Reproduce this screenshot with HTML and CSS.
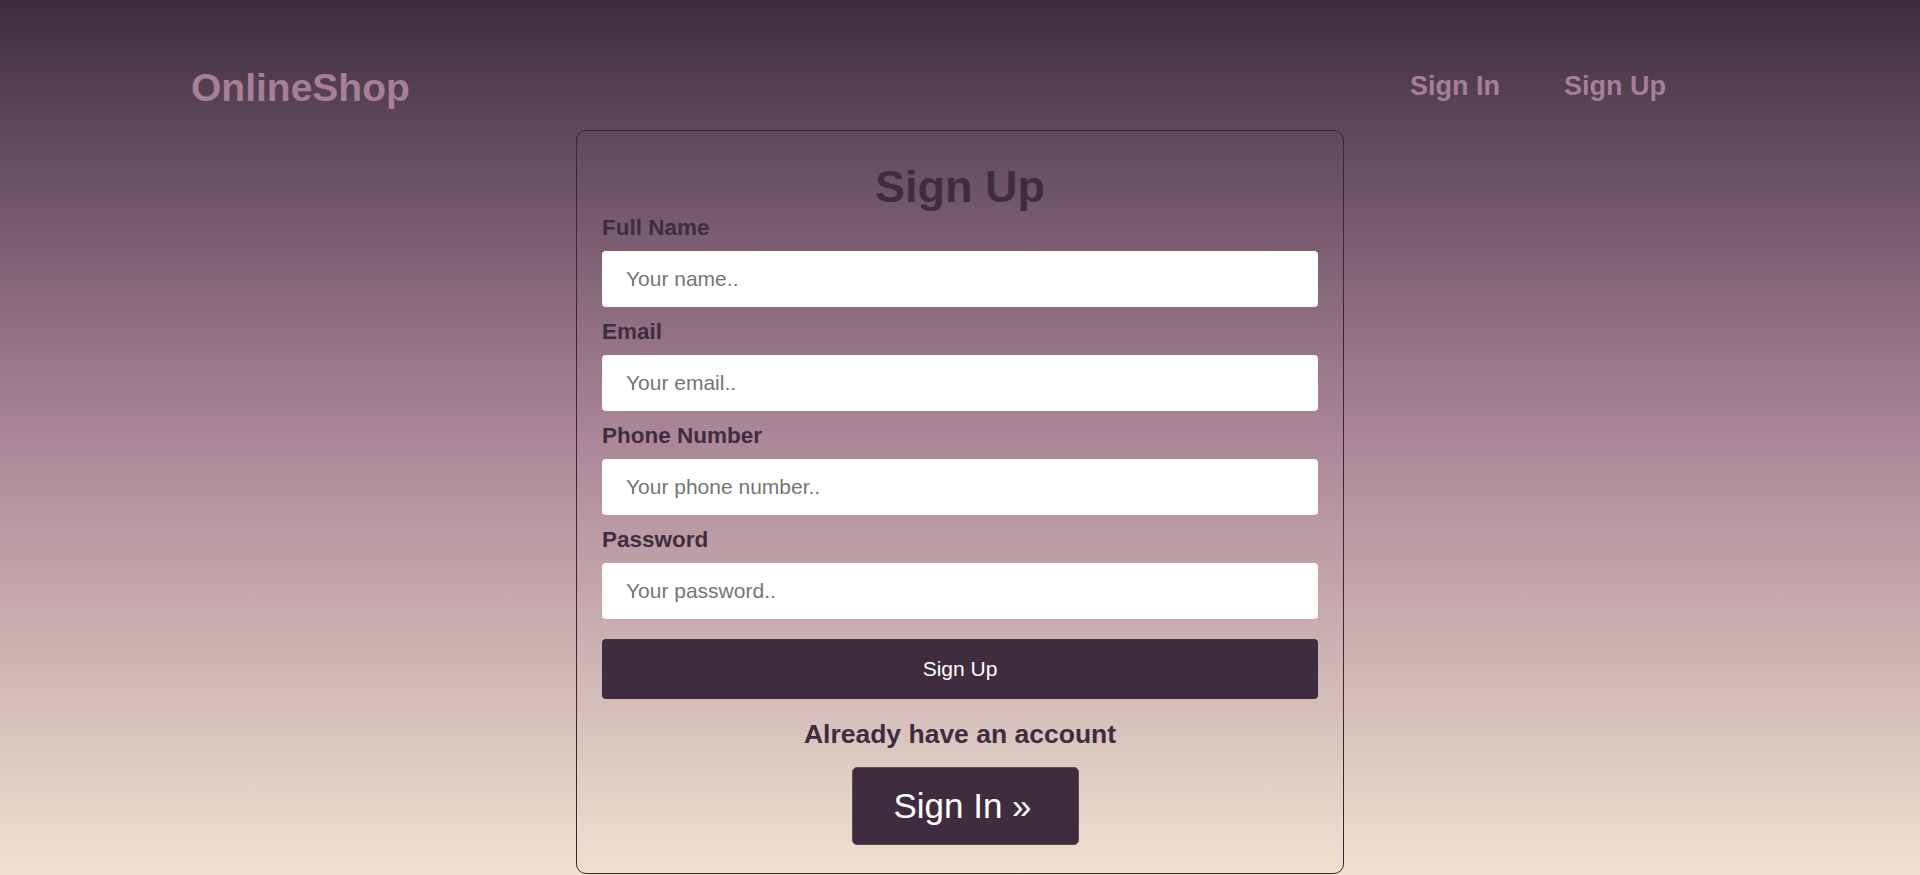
FILE: index.html
```html
<!DOCTYPE html>
<html lang="en">
<head>
<meta charset="utf-8">
<title>OnlineShop - Sign Up</title>
<link rel="stylesheet" href="styles.css">
</head>
<body>
  <header class="site-header">
    <a class="logo" href="#">OnlineShop</a>
    <nav class="nav">
      <a class="nav-link" href="#">Sign In</a>
      <a class="nav-link" href="#">Sign Up</a>
    </nav>
  </header>
  <main class="main">
    <form class="card">
      <h1 class="card-title">Sign Up</h1>
      <label class="field-label" for="name">Full Name</label>
      <input class="field-input" id="name" type="text" placeholder="Your name..">
      <label class="field-label" for="email">Email</label>
      <input class="field-input" id="email" type="email" placeholder="Your email..">
      <label class="field-label" for="phone">Phone Number</label>
      <input class="field-input" id="phone" type="text" placeholder="Your phone number..">
      <label class="field-label" for="password">Password</label>
      <input class="field-input" id="password" type="password" placeholder="Your password..">
      <button class="submit-btn" type="button">Sign Up</button>
      <p class="already">Already have an account</p>
      <a class="signin-btn" href="#">Sign In &raquo;</a>
    </form>
  </main>
</body>
</html>
```
FILE: styles.css
```css
* {
  box-sizing: border-box;
}

html, body {
  margin: 0;
  padding: 0;
}

body {
  min-height: 100vh;
  font-family: "Liberation Sans", Arial, sans-serif;
  background: linear-gradient(to bottom, #3e2d3f 0%, #ab8797 50%, #f0e1d1 100%);
  overflow: hidden;
}

.site-header {
  display: flex;
  justify-content: space-between;
  align-items: center;
  padding: 65px 254px 0 191px;
}

.logo {
  font-size: 39px;
  font-weight: bold;
  color: #a67f96;
  text-decoration: none;
  line-height: 45px;
}

.nav {
  display: flex;
  gap: 64px;
  padding-bottom: 2px;
}

.nav-link {
  font-size: 27px;
  font-weight: bold;
  color: #a67f96;
  text-decoration: none;
}

.main {
  display: flex;
  justify-content: center;
  padding-top: 20px;
}

.card {
  width: 768px;
  border: 1px solid #3b2536;
  border-radius: 10px;
  padding: 30px 25px 28px;
  display: flex;
  flex-direction: column;
  margin: 0;
}

.card-title {
  margin: 0 0 2px;
  font-size: 45px;
  line-height: 52px;
  font-weight: bold;
  text-align: center;
  color: #3f2d3f;
}

.field-label {
  display: block;
  font-size: 22.5px;
  line-height: 26px;
  font-weight: bold;
  color: #3f2d3f;
  margin-top: 12px;
}

.card-title + .field-label {
  margin-top: 0;
}

.field-input {
  display: block;
  width: 100%;
  height: 56px;
  margin-top: 10px;
  padding: 0 24px;
  border: none;
  border-radius: 4px;
  background: #ffffff;
  font-family: "Liberation Sans", Arial, sans-serif;
  font-size: 21px;
  color: #333;
  outline: none;
}

.field-input::placeholder {
  color: #757575;
}

.submit-btn {
  margin-top: 20px;
  width: 100%;
  height: 60px;
  border: none;
  border-radius: 4px;
  background: #3f2d3f;
  color: #ffffff;
  font-family: "Liberation Sans", Arial, sans-serif;
  font-size: 21px;
  cursor: pointer;
}

.already {
  margin: 20px 0 0;
  font-size: 26.5px;
  line-height: 30px;
  font-weight: bold;
  text-align: center;
  color: #3f2d3f;
}

.signin-btn {
  align-self: center;
  margin-top: 18px;
  margin-left: 11px;
  height: 78px;
  padding: 0 46px 0 40px;
  display: flex;
  align-items: center;
  background: #3f2d3f;
  border: 1px solid #5e4859;
  border-radius: 5px;
  color: #ffffff;
  font-size: 35px;
  text-decoration: none;
}
```
